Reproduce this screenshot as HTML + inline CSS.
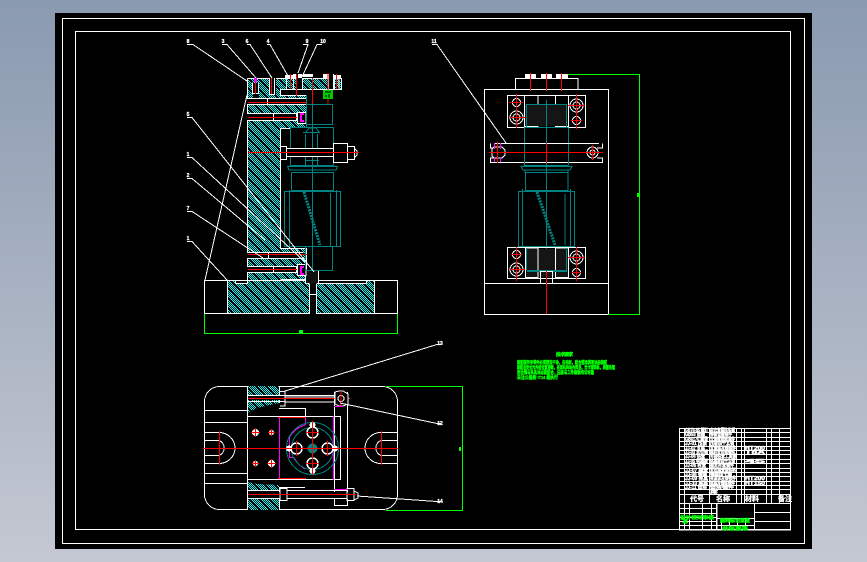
<!DOCTYPE html>
<html lang="zh"><head><meta charset="utf-8"><title>CAD</title>
<style>
html,body{margin:0;padding:0;width:867px;height:562px;overflow:hidden;background:linear-gradient(#8a9ab0,#c4c8d2)}
svg{position:absolute;left:0;top:0;display:block}
text{font-family:"Liberation Sans","Noto Sans CJK SC",sans-serif}
.w{fill:none;stroke:#fff;stroke-width:1}
.t{fill:none;stroke:#008484;stroke-width:1}
.r{fill:none;stroke:#f00;stroke-width:1}
.m{fill:none;stroke:#f0f;stroke-width:1}
.g{fill:none;stroke:#0f0;stroke-width:1}
.lb{fill:#fff;font-size:5px;font-weight:bold;text-anchor:middle;stroke:#fff;stroke-width:.3}
.tb{fill:#fff;font-size:5px;font-weight:bold;stroke:#fff;stroke-width:.4}
.gt{fill:#0f0;font-size:4.6px;font-weight:bold;stroke:#0f0;stroke-width:.4}
</style></head><body>
<svg width="867" height="562" viewBox="0 0 867 562" xmlns="http://www.w3.org/2000/svg" shape-rendering="crispEdges">
<defs>
<pattern id="c" width="2" height="2" patternUnits="userSpaceOnUse"><rect width="2" height="2" fill="#000"/><rect width="1" height="1" fill="#0ff"/><rect x="1" y="1" width="1" height="1" fill="#0ff"/></pattern>
<pattern id="h" width="10" height="10" patternUnits="userSpaceOnUse"><rect width="10" height="10" fill="url(#c)"/><path d="M-1 -1L11 11" stroke="#000" stroke-width="1"/></pattern>
</defs>
<rect x="55" y="13" width="757" height="536" fill="#000"/>
<rect x="62.5" y="18.5" width="742" height="525" class="w"/>
<rect x="75.5" y="31.5" width="715" height="498" class="w"/>

<!-- SIDE VIEW -->
<path d="M247 78H341V89H280V95H306V128H280V248H306V283H366V280H374V314H227V280H235V283H247Z" fill="url(#h)"/>
<path class="w" d="M247.5 78.5H341.5V89.5H280.5V95.5H306.5V128.5H280.5V248.5H306.5V283.5M247.5 78.5V283.5H235.5V280.5H227.5V314M280.5 130V248M366.5 283.5V280.5H374.5V314M280.5 279.5H305M306.5 283.5H366.5"/>
<rect x="204.5" y="280.5" width="193" height="33" class="w"/>
<path class="w" d="M227.5 280.5V313.5M374.5 280.5V313.5"/>
<rect x="305" y="270" width="14" height="13" fill="#111"/>
<path class="w" d="M305.5 270.5V283.5M318.5 270.5V283.5"/>
<rect x="309" y="283" width="8" height="31" fill="#000"/>
<path class="w" d="M309.5 283.5V314M316.5 283.5V314M309 294.5H316"/>
<path class="g" d="M204.5 314V333.5H397.5V314"/><rect x="299" y="330" width="4" height="3" fill="#0f0"/>

<!-- top plate details -->
<rect x="253" y="83" width="6" height="15" fill="#000"/><path class="w" d="M252.5 82.5V93.5H258.5V82.5"/><path class="r" d="M255.5 80V94"/><rect x="254" y="78" width="3" height="4" fill="#f0f"/>
<rect x="269" y="78" width="7" height="16" fill="#000"/><path class="w" d="M269.5 78V94.5H274.5V78"/><path class="r" d="M271.5 78V94"/>
<rect x="285" y="75" width="12" height="3" fill="#fff"/><path class="w" d="M286.5 78V89M293.5 78V89"/><path class="r" d="M290.5 74V89"/>
<rect x="293" y="74" width="20" height="3" fill="#fff"/><rect x="297" y="74" width="6" height="15" fill="#000"/><rect x="298" y="74" width="4" height="4" fill="#fff"/><path class="r" d="M296.5 74V96"/><path class="w" d="M302.5 78V89"/>
<path class="r" d="M312.5 78V104"/>
<rect x="323" y="74" width="6" height="5" fill="#fff"/><rect x="328" y="78" width="6" height="11" fill="#000"/><path class="w" d="M328.5 74V89M333.5 74V89"/><path class="r" d="M328 73V105"/>
<rect x="333" y="75" width="8" height="3" fill="#fff"/><path class="w" d="M334.5 78V89M339 78V89"/><path class="r" d="M336.5 74V89"/>
<rect x="323" y="90" width="10" height="9" fill="#0c0"/><path d="M325 92h6M325 96h2M329 94v4" stroke="#000" fill="none"/>
<!-- arm bolts -->
<rect x="247" y="98" width="59" height="7" fill="#000"/><path class="w" d="M247 98.5H306M247 104.5H306M267.5 98V105"/><path d="M248 102.5H307" stroke="#f00" stroke-width="1"/>
<rect x="247" y="113" width="50" height="8" fill="#000"/><path class="w" d="M247 113.5H296.5V120.5H247M273.5 113V121"/><path class="r" d="M248 117.5H307"/>
<rect x="297" y="112" width="9" height="12" fill="#000"/><rect x="297.5" y="112.5" width="8.5" height="11" class="w"/><path d="M304 114H301V121H304" stroke="#f0f" stroke-width="2" fill="none"/>
<rect x="247" y="252" width="56" height="7" fill="#000"/><path class="w" d="M247 252.500H303.500M247 258.500H303.500M268.500 252V259"/><path class="r" d="M248 254.500H307"/>
<rect x="247" y="266" width="50" height="7" fill="#000"/><path class="w" d="M247 266.500H296.500V272.500H247M273.500 266V273"/><path class="r" d="M248 269.500H307"/>
<rect x="297" y="264" width="9" height="12" fill="#000"/><rect x="297.500" y="264.500" width="8.500" height="11" class="w"/><path d="M304 267H301V274H304" stroke="#f0f" stroke-width="2" fill="none"/>
<!-- teal body -->
<rect x="290" y="128" width="43" height="37" fill="#000"/>
<path class="t" d="M306.500 104.500H332.500V124.500H306.500M306.500 95V128M312.500 104V270"/>
<path class="t" d="M290.500 127.500H333.500M290.500 127.500V165.500M333.500 127.500V165.500M290.500 165.500H333.500M287.500 166.500H337.500L336 170H289ZM291.500 172.500H333.500V190.500H291.500Z"/>
<path class="t" d="M305.500 134V165M317.500 134V165M306 132L309 128H316L319 132M303 132.500H320M306 160.500H319"/>
<rect x="284.500" y="191.500" width="56" height="55" class="t"/>
<path class="t" d="M289.500 190V247M330.500 193V246M336.500 190V247"/>
<path d="M304 192L320 245" stroke="#008484" stroke-width="3" stroke-dasharray="2 1" fill="none"/>
<path class="t" d="M305.500 247V270.500H332.500V247M305 270.500H333"/>
<!-- side bolt -->
<rect x="288" y="148" width="46" height="9" fill="#000"/>
<path class="w" d="M280.500 146.500H286.500V159.500H280.500M286.500 148.500H334M286.500 156.500H334M286.500 149V158"/>
<rect x="333.500" y="143.500" width="14" height="19" fill="#000" stroke="#fff"/>
<path class="w" d="M347.500 146.500H354.500V159.500H347.500M354.500 148.500L357 151V155L354.500 157.500"/>
<path d="M248 152.500H359" stroke="#f00"/>

<!-- leaders side -->
<g class="w" stroke-width="1">
<path d="M187 44.500H193L247 81"/>
<path d="M222 44.500H227L256 78"/>
<path d="M247 44.500H250L272 78"/>
<path d="M267 44.500H270L288 76"/>
<path d="M303 44.500H308L298 73"/>
<path d="M322 44.500H317L302 77"/>
<path d="M187 117.500H192L314 272"/>
<path d="M187 157.500H192L305 262"/>
<path d="M187 178.500H192L265 240"/>
<path d="M187 211.500H192L263 258"/>
<path d="M187 241.500H192L227 280"/>
<path d="M247 95L205 280"/>
</g>
<text class="lb" x="188" y="43">8</text><text class="lb" x="223" y="43">3</text><text class="lb" x="247" y="43">6</text><text class="lb" x="268" y="43">4</text><text class="lb" x="307" y="43">9</text><text class="lb" x="323" y="43">10</text>
<text class="lb" x="188" y="116">5</text><text class="lb" x="188" y="156">1</text><text class="lb" x="188" y="177">2</text><text class="lb" x="188" y="210">7</text><text class="lb" x="188" y="240">1</text>

<!-- FRONT VIEW -->
<rect x="484.500" y="89.500" width="124" height="225" class="w"/>
<path class="w" d="M484.500 283.500H608.500M515.500 89V78.500H578V89"/>
<rect x="525" y="74" width="11" height="4" fill="#fff"/><rect x="541" y="74" width="11" height="4" fill="#fff"/><rect x="556" y="74" width="12" height="4" fill="#fff"/>
<path class="r" d="M530.500 73V91M546.500 73V91M561.500 73V91"/>
<path class="g" d="M568 74.500H639.500V314.500H608"/><rect x="637" y="193" width="2" height="4" fill="#0f0"/>

<rect x="507.500" y="95.500" width="78" height="32" fill="#000" class="w"/>
<path class="w" d="M524.500 96V126.500H538V96M555.500 96V126.500H568.500V96M538 124.500H555"/>
<rect x="525" y="104" width="41" height="22" fill="#151515"/>
<path class="t" d="M526.500 104.500H566.500V127.500H526.500ZM524.500 127.500V165.500M568.500 127.500V165.500M524 127.500H568M524 165.500H568M546.500 100V314"/>
<g class="w"><circle cx="516.500" cy="102.500" r="4"/><circle cx="516.500" cy="117.500" r="6.500"/><circle cx="516.500" cy="117.500" r="3.500"/><circle cx="576.500" cy="105.500" r="6.500"/><circle cx="576.500" cy="105.500" r="3.500"/><circle cx="576.500" cy="120.500" r="4"/></g>
<path class="r" d="M516.500 94V128M509 102.500H523M510 117.500H525M576.500 94V129M568 105.500H585M571 120.500H582"/>
<path class="r" d="M530.500 73V91"/>
<rect x="490.500" y="143.500" width="112" height="19" fill="#0c0c0c" class="w"/>
<path d="M490 143h4v19h-4zM599 143h4v19h-4z" fill="#000"/>
<path class="w" d="M490.500 143.500V148H497M490.500 162.500V158H497M602.500 143.500V148H597M602.500 162.500V158H597"/>
<path d="M494 147L492 149V156L494 158H502L505 155V150L502 147Z" fill="#000" stroke="#fff"/>
<circle cx="592.500" cy="152.500" r="5.500" class="w" fill="#000"/><circle cx="592.500" cy="152.500" r="2.500" class="w"/>
<path class="m" d="M494.500 143V149M500.500 143V149M494.500 157V162M500.500 157V162"/>
<path class="r" d="M489 152.500H603M497.500 142V163M592.500 145V160M546.500 143V163"/>
<path class="t" d="M524.500 162V165.500M568.500 162V165.500M521 166.500H572L570 170H523ZM525 170V172.500H568V170M525.500 172.500V190.500H568V172.500M546.500 165V271"/>
<rect x="518.500" y="191.500" width="56" height="55" class="t"/>
<path class="t" d="M522.500 189V247M570.500 189V247M565 194V245"/>
<path d="M537 192L555 245" stroke="#008484" stroke-width="3" stroke-dasharray="2 1" fill="none"/>
<rect x="507.500" y="247.500" width="78" height="31" fill="#000" class="w"/>
<rect x="525" y="249" width="43" height="28" fill="#151515"/>
<path class="w" d="M525.500 248V277.500H538V248ZM555.500 248V277.500H568.500V248Z"/>
<path class="t" d="M526.500 248V270M566.500 248V270"/><rect x="527" y="270" width="40" height="2" fill="#008484"/>
<path class="w" d="M540.500 283V271.500H552.500V283"/>
<path class="r" d="M546.500 271V314"/>
<g class="w"><circle cx="516.500" cy="254.500" r="4"/><circle cx="516.500" cy="269.500" r="6.500"/><circle cx="516.500" cy="269.500" r="3.500"/><circle cx="576.500" cy="257.500" r="6.500"/><circle cx="576.500" cy="257.500" r="3.500"/><circle cx="576.500" cy="272.500" r="4"/></g>
<path class="r" d="M516.500 247V281M511 254.500H522M510 269.500H525M576.500 247V281M568 257.500H585M572 272.500H581"/>
<path class="w" d="M432 44.500H437L506 143"/>
<text class="lb" x="434" y="43">11</text>

<!-- TOP VIEW -->
<rect x="204.500" y="386.500" width="193" height="123" rx="15" class="w"/>
<path d="M247 386H279V395H247ZM247 498H279V510H247Z" fill="url(#h)"/>
<path d="M247 400H279V403L257 408L247 413Z M247 482L257 484L279 485V490H247Z" fill="url(#h)"/>
<path class="w" d="M247.500 386V510M279.500 386V403M279.500 488V510M204 410.500H248M204 422.500H248M204 432.500H219A16 15.500 0 0 1 219 463.500H204M204 440.500H219A8 8 0 0 1 219 455.500H204M204 473.500H248M204 483.500H248"/>
<path class="w" d="M398 432.500H381A16 15.500 0 0 0 381 463.500H398M398 440.500H381A8 8 0 0 0 381 455.500H398"/>
<path class="w" d="M248 416.500H340.500V479.500H248M279 408.500H305.500V416M279 487.500H305"/>
<path class="w" d="M334.500 392V505.500H347.500V392"/>
<rect x="248" y="395" width="86" height="5" fill="#000"/>
<path class="w" d="M248 395.500H334M248 401.500H285M285 390.500V406H280M279 391.500H285M285 397H334M285 402H334"/>
<path class="r" d="M248 398.500H350"/>
<path d="M335 392L339 391H343L348 394V404L343 406H339L335 404Z" fill="#000" stroke="#fff"/><circle cx="341" cy="398.500" r="3" class="w"/>
<path class="r" d="M341 391V406"/><path class="m" d="M334 406.500H343"/>
<rect x="248" y="492" width="108" height="7" fill="#000"/>
<path class="w" d="M248 490.500H280M248 498.500H280M280 488.500V500.500H287V488.500ZM287 490.500H347M287 498.500H347M347 488.500H354V500.500H347ZM354 491L358 493V498L354 500"/>
<path class="r" d="M248 494.500H356"/><path class="m" d="M334 489.500H348"/>
<path class="m" d="M279.500 417V478M333.500 416V480M305.500 417V425"/>
<path class="r" d="M278 417.500H306M278 478.500H306"/>
<path class="m" d="M305 425A27 27 0 0 0 289 438H289.500V457.500H294A27 27 0 0 0 305 469"/>
<circle cx="312.500" cy="448.500" r="21" class="t"/><circle cx="312.500" cy="448.500" r="26" class="t"/>
<circle cx="312.500" cy="448.500" r="5" fill="#008484"/><path d="M307 448.500H318M312.500 443V454" stroke="#000"/>
<g fill="#000" stroke="#fff" stroke-width="1.500"><circle cx="312.500" cy="432.500" r="5.500"/><circle cx="296.500" cy="448.500" r="5.500"/><circle cx="327.500" cy="448.500" r="5.500"/><circle cx="312.500" cy="463.500" r="5.500"/></g>
<g fill="#fff"><circle cx="312.500" cy="425" r="3"/><circle cx="289" cy="448.500" r="3"/><circle cx="335" cy="448.500" r="3"/><circle cx="312.500" cy="471" r="3"/><circle cx="255.500" cy="432.500" r="3.500"/><circle cx="271.500" cy="432.500" r="2.500"/><circle cx="255.500" cy="463.500" r="2.500"/><circle cx="271.500" cy="463.500" r="3.500"/></g>
<path class="r" d="M203 448.500H398M219.500 431V465M381.500 431V465M312.500 421V475M296.500 441V456M327.500 441V456M306 432.500H319M306 463.500H319M251 432.500H260M255.500 428V437M268 432.500H275M271.500 429V436M252 463.500H259M255.500 460V467M267 463.500H276M271.500 459V468"/>
<path class="g" d="M386 386.500H462.500V510.500H386"/><rect x="459" y="447" width="2" height="4" fill="#0f0"/>
<path class="w" d="M285 391L437 344.500H441M340 403L437 423.500H441M357 496L437 501.500H441"/>
<text class="lb" x="440" y="345">13</text><text class="lb" x="440" y="425">12</text><text class="lb" x="440" y="503">14</text>

<!-- NOTES -->
<text class="gt" x="556" y="356" textLength="17">技术要求</text>
<text class="gt" x="517" y="364" textLength="90" lengthAdjust="spacingAndGlyphs">装配前所有零件必须清洗干净，去毛刺，配合面涂润滑油后装配</text>
<text class="gt" x="517" y="369" textLength="98" lengthAdjust="spacingAndGlyphs">装配后定位元件应位置准确，夹紧机构动作灵活，无卡滞现象，表面处理</text>
<text class="gt" x="517" y="374" textLength="77" lengthAdjust="spacingAndGlyphs">定位销与夹具体过盈配合，压板与工件接触均匀可靠</text>
<text class="gt" x="517" y="379" textLength="41" lengthAdjust="spacingAndGlyphs">未注公差按 IT14 级执行</text>

<!-- TITLE BLOCK -->
<rect x="679.500" y="428.500" width="111" height="101.500" fill="#000" class="w"/>
<path class="w" d="M679 432.500H791M679 437.500H791M679 441.500H791M679 446.500H791M679 450.500H791M679 454.500H791M679 459.500H791M679 463.500H791M679 468.500H791M679 472.500H791M679 476.500H791M679 481.500H791M679 485.500H791M679 489.500H791M679 494.500H791M679 503.500H791"/>
<path class="w" d="M684.500 428V503M709.500 428V503M736.500 428V503M741.500 428V503M744.500 428V503M766.500 428V503M771.500 428V503M779.500 428V503"/>
<g class="tb">
<text x="685" y="432" textLength="23" lengthAdjust="spacingAndGlyphs">GB70-85 螺钉</text><text x="710" y="432" textLength="25" lengthAdjust="spacingAndGlyphs">内六角圆柱头螺</text>
<text x="685" y="436" textLength="20" lengthAdjust="spacingAndGlyphs">GB93 垫圈</text><text x="710" y="436" textLength="22" lengthAdjust="spacingAndGlyphs">弹簧垫圈钢件</text>
<text x="685" y="441" textLength="23" lengthAdjust="spacingAndGlyphs">GB6170 螺母</text><text x="710" y="441" textLength="25" lengthAdjust="spacingAndGlyphs">六角螺母标准件</text>
<text x="685" y="445" textLength="22" lengthAdjust="spacingAndGlyphs">JJ-01 压板</text><text x="710" y="445" textLength="24" lengthAdjust="spacingAndGlyphs">压板四十五钢</text>
<text x="685" y="450" textLength="20" lengthAdjust="spacingAndGlyphs">JJ-02 支座</text><text x="710" y="450" textLength="26" lengthAdjust="spacingAndGlyphs">支承座灰铸铁件</text><text x="745" y="450" textLength="20" lengthAdjust="spacingAndGlyphs">HT200</text>
<text x="685" y="454" textLength="23" lengthAdjust="spacingAndGlyphs">JJ-03 定位销</text><text x="710" y="454" textLength="25" lengthAdjust="spacingAndGlyphs">圆柱定位销钢件</text><text x="745" y="454" textLength="20" lengthAdjust="spacingAndGlyphs">T8A</text>
<text x="685" y="458" textLength="20" lengthAdjust="spacingAndGlyphs">JJ-04 钻套</text><text x="710" y="458" textLength="26" lengthAdjust="spacingAndGlyphs">可换钻套工具钢</text>
<text x="685" y="463" textLength="23" lengthAdjust="spacingAndGlyphs">JJ-05 钻模板</text><text x="710" y="463" textLength="25" lengthAdjust="spacingAndGlyphs">钻模板四十五钢</text><text x="745" y="463" textLength="20" lengthAdjust="spacingAndGlyphs">45</text>
<text x="685" y="467" textLength="21" lengthAdjust="spacingAndGlyphs">JJ-06 衬套</text><text x="710" y="467" textLength="24" lengthAdjust="spacingAndGlyphs">固定衬套钢件</text>
<text x="685" y="472" textLength="23" lengthAdjust="spacingAndGlyphs">JJ-07 轴套</text><text x="710" y="472" textLength="26" lengthAdjust="spacingAndGlyphs">定位轴套钢件料</text>
<text x="685" y="476" textLength="22" lengthAdjust="spacingAndGlyphs">JJ-08 销轴</text><text x="710" y="476" textLength="22" lengthAdjust="spacingAndGlyphs">销轴四十钢</text>
<text x="685" y="480" textLength="23" lengthAdjust="spacingAndGlyphs">JJ-09 夹具</text><text x="710" y="480" textLength="26" lengthAdjust="spacingAndGlyphs">夹具体灰铸铁件</text><text x="745" y="480" textLength="20" lengthAdjust="spacingAndGlyphs">HT200</text>
<text x="685" y="485" textLength="23" lengthAdjust="spacingAndGlyphs">JJ-10 底座</text><text x="710" y="485" textLength="25" lengthAdjust="spacingAndGlyphs">底座灰铸铁铸件</text><text x="745" y="485" textLength="20" lengthAdjust="spacingAndGlyphs">HT150</text>
<text x="685" y="489" textLength="22" lengthAdjust="spacingAndGlyphs">JJ-11 垫块</text><text x="710" y="489" textLength="24" lengthAdjust="spacingAndGlyphs">垫块钢件</text>
<text x="710" y="494" textLength="8" lengthAdjust="spacingAndGlyphs">序</text>
</g>
<g fill="#fff" font-size="7" font-weight="bold" text-anchor="middle" stroke="#fff" stroke-width=".3">
<text x="697" y="501">代号</text><text x="723" y="501">名称</text><text x="752" y="501">材料</text><text x="785" y="501">备注</text>
</g>
<path class="w" d="M679 508.500H716M679 513.500H716M679 517.500H716M679 521.500H716M679 525.500H716M684.500 503V530M689.500 503V530M702.500 503V530M711.500 503V530M716.500 503V530"/>
<path class="w" d="M717 503V530M754.500 503V530M754 512.500H791M754 521.500H791M717 518.500H754M717 525.500H754M721.500 518V530M729.500 518V530M737.500 518V530M745.500 518V530"/>
<g class="gt"><text x="680" y="519" textLength="34" lengthAdjust="spacingAndGlyphs">设计校对审核</text><text x="682" y="523" textLength="6">工艺</text><text x="720" y="522" textLength="30" lengthAdjust="spacingAndGlyphs">图样标记重量</text><text x="722" y="530" textLength="26" lengthAdjust="spacingAndGlyphs">共张第张</text></g>
</svg>
</body></html>
